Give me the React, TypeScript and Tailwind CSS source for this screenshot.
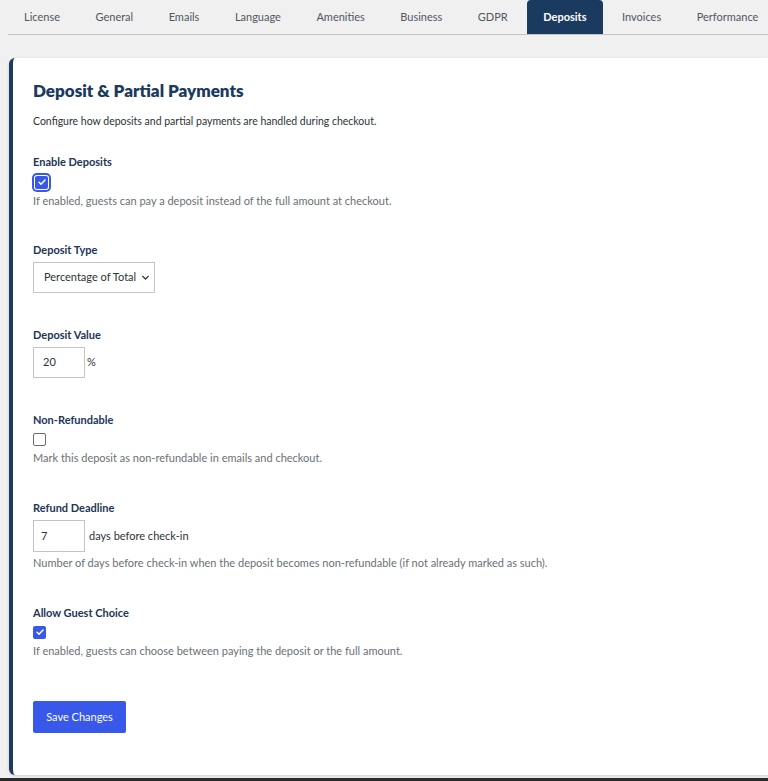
import { useState } from 'react';

const tabs = ['License', 'General', 'Emails', 'Language', 'Amenities', 'Business', 'GDPR', 'Deposits', 'Invoices', 'Performance'];

function Check({ checked, focused }: { checked: boolean; focused?: boolean }) {
  return (
    <span
      className={`flex h-[13px] w-[13px] items-center justify-center rounded-[2px] ${
        checked ? 'bg-[#3858e9]' : 'border border-[#6b6b6b] bg-white'
      } ${focused ? 'shadow-[0_0_0_1px_#ffffff,0_0_0_3px_#3858e9]' : ''}`}
    >
      {checked && (
        <svg viewBox="0 0 12 12" className="h-[10px] w-[10px]">
          <path d="M2.5 6.3l2.3 2.3L9.6 3.6" fill="none" stroke="white" strokeWidth="1.8" strokeLinecap="round" strokeLinejoin="round" />
        </svg>
      )}
    </span>
  );
}

function Label({ children }: { children: string }) {
  return <div className="text-[11px] font-bold leading-4 text-[#1d3557]">{children}</div>;
}

function Help({ children }: { children: string }) {
  return <p className="mt-[3px] text-[11px] leading-4 text-[#6b7075]">{children}</p>;
}

export default function App() {
  const [active] = useState('Deposits');

  return (
    <div className="flex h-[781px] flex-col overflow-hidden bg-[#f0f0f1] font-['Lato',sans-serif]">
      <nav className="ml-2 flex h-[35px] gap-[3.5px] border-b border-[#c3c4c7]">
        {tabs.map((t) => (
          <div
            key={t}
            className={`flex h-[34px] items-center whitespace-nowrap rounded-t-[4px] px-4 text-[11px] ${
              t === active ? 'bg-[#1b3a5f] font-bold text-white' : 'text-[#50575e]'
            }`}
          >
            {t}
          </div>
        ))}
      </nav>

      <main className="ml-[9px] mt-[23px] flex-1 rounded-l-[6px] border-l-4 border-[#1b3a5f] bg-white pl-5 pt-[23px] shadow-[0_1px_3px_rgba(0,0,0,0.15)]">
        <h1 className="text-[17px] font-extrabold leading-5 text-[#1b3a5f]">Deposit &amp; Partial Payments</h1>
        <p className="mt-[12px] text-[10.5px] leading-4 text-[#2c3338]">
          Configure how deposits and partial payments are handled during checkout.
        </p>

        <section className="mt-[25px]">
          <Label>Enable Deposits</Label>
          <div className="mt-[4px] flex h-[16px] items-center pl-[2px]">
            <Check checked focused />
          </div>
          <Help>If enabled, guests can pay a deposit instead of the full amount at checkout.</Help>
        </section>

        <section className="mt-[33px]">
          <Label>Deposit Type</Label>
          <div className="mt-[4px] flex h-[31px] w-[122px] items-center justify-between whitespace-nowrap border border-[#c3c4c7] pl-[10px] pr-[4px] text-[11px] text-[#2c3338]">
            <span>Percentage of Total</span>
            <svg viewBox="0 0 10 10" className="h-[9px] w-[9px]">
              <path d="M1.5 3.2L5 6.7l3.5-3.5" fill="none" stroke="#2c3338" strokeWidth="1.4" />
            </svg>
          </div>
        </section>

        <section className="mt-[34px]">
          <Label>Deposit Value</Label>
          <div className="mt-[4px] flex items-center gap-[2px] text-[11px] text-[#2c3338]">
            <div className="flex h-[31px] w-[52px] items-center border border-[#c3c4c7] pl-[9px]">20</div>
            <span>%</span>
          </div>
        </section>

        <section className="mt-[34px]">
          <Label>Non-Refundable</Label>
          <div className="mt-[3px] flex h-[16px] items-center">
            <Check checked={false} />
          </div>
          <Help>Mark this deposit as non-refundable in emails and checkout.</Help>
        </section>

        <section className="mt-[34px]">
          <Label>Refund Deadline</Label>
          <div className="mt-[4px] flex items-center gap-[4px] text-[11px] text-[#2c3338]">
            <div className="flex h-[32px] w-[52px] items-center border border-[#c3c4c7] pl-[7px]">7</div>
            <span>days before check-in</span>
          </div>
          <Help>Number of days before check-in when the deposit becomes non-refundable (if not already marked as such).</Help>
        </section>

        <section className="mt-[34px]">
          <Label>Allow Guest Choice</Label>
          <div className="mt-[3px] flex h-[16px] items-center">
            <Check checked />
          </div>
          <Help>If enabled, guests can choose between paying the deposit or the full amount.</Help>
        </section>

        <button className="mt-[42px] h-[32px] w-[93px] rounded-[2px] bg-[#3858e9] text-[11px] text-white">
          Save Changes
        </button>
      </main>
      <div className="mt-[3px] h-[3px] bg-[#2a2a2a]" />
    </div>
  );
}
